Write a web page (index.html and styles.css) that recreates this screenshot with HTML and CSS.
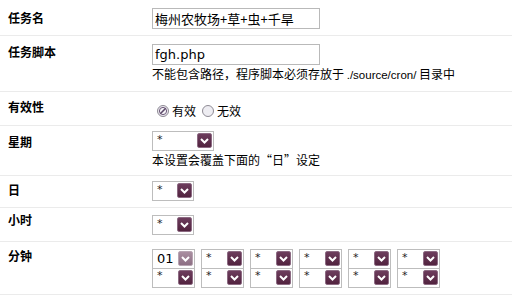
FILE: index.html
```html
<!DOCTYPE html>
<html lang="zh-CN">
<head>
<meta charset="utf-8">
<title>计划任务编辑</title>
<link rel="stylesheet" href="styles.css">
</head>
<body>
<div class="form">
  <div class="row r1">
    <div class="label">任务名</div>
    <div class="field"><div class="text">梅州农牧场+草+虫+千旱</div></div>
  </div>
  <div class="row r2">
    <div class="label">任务脚本</div>
    <div class="field">
      <div class="text latin">fgh.php</div>
      <div class="tip">不能包含路径，程序脚本必须存放于 <span class="arial">./source/cron/</span> 目录中</div>
    </div>
  </div>
  <div class="row r3">
    <div class="label">有效性</div>
    <div class="field radios">
      <span class="radio">
        <svg width="12" height="12" viewBox="0 0 12 12"><circle cx="6" cy="6" r="5.5" fill="#ece9f0" stroke="#8e8a94"/><circle cx="6" cy="6" r="3.6" fill="#f6f4f8" stroke="#6d5a78" stroke-width="1"/><line x1="3.8" y1="8.2" x2="8.2" y2="3.8" stroke="#5c4a6a" stroke-width="1.6" stroke-linecap="round"/></svg>
        有效
      </span>
      <span class="radio">
        <svg width="12" height="12" viewBox="0 0 12 12"><circle cx="6" cy="6" r="5.5" fill="#eeedf2" stroke="#8e8a94"/></svg>
        无效
      </span>
    </div>
  </div>
  <div class="row r4">
    <div class="label">星期</div>
    <div class="field">
      <div class="select wide"><span class="val">*</span><span class="btn"><svg width="9" height="6" viewBox="0 0 9 6"><path d="M1 1 L4.5 4.5 L8 1" fill="none" stroke="#fff" stroke-width="2"/></svg></span></div>
      <div class="tip">本设置会覆盖下面的“日”设定</div>
    </div>
  </div>
  <div class="row r5">
    <div class="label">日</div>
    <div class="field">
      <div class="select"><span class="val">*</span><span class="btn"><svg width="9" height="6" viewBox="0 0 9 6"><path d="M1 1 L4.5 4.5 L8 1" fill="none" stroke="#fff" stroke-width="2"/></svg></span></div>
    </div>
  </div>
  <div class="row r6">
    <div class="label">小时</div>
    <div class="field">
      <div class="select"><span class="val">*</span><span class="btn"><svg width="9" height="6" viewBox="0 0 9 6"><path d="M1 1 L4.5 4.5 L8 1" fill="none" stroke="#fff" stroke-width="2"/></svg></span></div>
    </div>
  </div>
  <div class="row r7">
    <div class="label">分钟</div>
    <div class="field grid">
      <div class="select"><span class="val num">01</span><span class="btn light"><svg width="9" height="6" viewBox="0 0 9 6"><path d="M1 1 L4.5 4.5 L8 1" fill="none" stroke="#fff" stroke-width="2"/></svg></span></div>
      <div class="select"><span class="val">*</span><span class="btn"><svg width="9" height="6" viewBox="0 0 9 6"><path d="M1 1 L4.5 4.5 L8 1" fill="none" stroke="#fff" stroke-width="2"/></svg></span></div>
      <div class="select"><span class="val">*</span><span class="btn"><svg width="9" height="6" viewBox="0 0 9 6"><path d="M1 1 L4.5 4.5 L8 1" fill="none" stroke="#fff" stroke-width="2"/></svg></span></div>
      <div class="select"><span class="val">*</span><span class="btn"><svg width="9" height="6" viewBox="0 0 9 6"><path d="M1 1 L4.5 4.5 L8 1" fill="none" stroke="#fff" stroke-width="2"/></svg></span></div>
      <div class="select"><span class="val">*</span><span class="btn"><svg width="9" height="6" viewBox="0 0 9 6"><path d="M1 1 L4.5 4.5 L8 1" fill="none" stroke="#fff" stroke-width="2"/></svg></span></div>
      <div class="select"><span class="val">*</span><span class="btn"><svg width="9" height="6" viewBox="0 0 9 6"><path d="M1 1 L4.5 4.5 L8 1" fill="none" stroke="#fff" stroke-width="2"/></svg></span></div>
      <div class="select"><span class="val">*</span><span class="btn"><svg width="9" height="6" viewBox="0 0 9 6"><path d="M1 1 L4.5 4.5 L8 1" fill="none" stroke="#fff" stroke-width="2"/></svg></span></div>
      <div class="select"><span class="val">*</span><span class="btn"><svg width="9" height="6" viewBox="0 0 9 6"><path d="M1 1 L4.5 4.5 L8 1" fill="none" stroke="#fff" stroke-width="2"/></svg></span></div>
      <div class="select"><span class="val">*</span><span class="btn"><svg width="9" height="6" viewBox="0 0 9 6"><path d="M1 1 L4.5 4.5 L8 1" fill="none" stroke="#fff" stroke-width="2"/></svg></span></div>
      <div class="select"><span class="val">*</span><span class="btn"><svg width="9" height="6" viewBox="0 0 9 6"><path d="M1 1 L4.5 4.5 L8 1" fill="none" stroke="#fff" stroke-width="2"/></svg></span></div>
      <div class="select"><span class="val">*</span><span class="btn"><svg width="9" height="6" viewBox="0 0 9 6"><path d="M1 1 L4.5 4.5 L8 1" fill="none" stroke="#fff" stroke-width="2"/></svg></span></div>
      <div class="select"><span class="val">*</span><span class="btn"><svg width="9" height="6" viewBox="0 0 9 6"><path d="M1 1 L4.5 4.5 L8 1" fill="none" stroke="#fff" stroke-width="2"/></svg></span></div>
    </div>
  </div>
</div>
</body>
</html>
```

FILE: styles.css
```css
html, body {
  margin: 0;
  padding: 0;
  background: #fff;
}
body {
  font-family: "Noto Sans CJK SC", "DejaVu Sans", sans-serif;
  font-size: 12px;
  color: #000;
}
.form {
  width: 512px;
}
.row {
  display: flex;
  align-items: flex-start;
  border-bottom: 1px solid #ebebeb;
}
.label {
  width: 152px;
  padding-left: 8px;
  box-sizing: border-box;
  font-weight: bold;
  line-height: 16px;
  flex: none;
}
.field {
  flex: 1;
}
.r1 { padding-bottom: 6px; }
.r1 .label { padding-top: 10px; }
.r1 .field { padding-top: 8px; }
.r2 { padding-bottom: 7px; }
.r2 .label { padding-top: 8px; }
.r2 .field { padding-top: 8px; }
.r3 { padding-bottom: 8px; }
.r3 .label { padding-top: 7px; }
.r3 .field { padding-top: 13px; }
.r4 { padding-bottom: 7px; }
.r4 .label { padding-top: 8px; }
.r4 .field { padding-top: 5px; }
.r5 { padding-bottom: 6px; }
.r5 .label { padding-top: 6px; }
.r5 .field { padding-top: 5px; }
.r6 { padding-bottom: 6px; }
.r6 .label { padding-top: 4px; }
.r6 .field { padding-top: 7px; }
.r7 { padding-bottom: 6px; }
.r7 .label { padding-top: 6px; }
.r7 .field { padding-top: 7px; }
.latin {
  font-family: "DejaVu Sans", "Noto Sans CJK SC", sans-serif;
}
.arial {
  font-family: "Liberation Sans", Arial, sans-serif;
  font-size: 11.5px;
}
.text {
  width: 168px;
  height: 21px;
  box-sizing: border-box;
  border: 1px solid #b9b9b9;
  font-size: 13px;
  line-height: 19px;
  padding-left: 2px;
  white-space: nowrap;
  overflow: hidden;
}
.tip {
  line-height: 17px;
}
.radios {
  display: flex;
  align-items: center;
  line-height: 12px;
}
.radio {
  display: inline-flex;
  align-items: center;
  gap: 3px;
  margin-left: 5px;
  margin-right: 1px;
}
.radio svg { display: block; }
.select {
  width: 42px;
  height: 20px;
  box-sizing: border-box;
  border: 1px solid #bdbdbd;
  background: #fff;
  display: flex;
  align-items: flex-start;
  justify-content: space-between;
  padding: 1px 1px 0 4px;
}
.select.wide { width: 62px; }
.val {
  font-family: "DejaVu Sans", sans-serif;
  font-size: 11px;
  line-height: 11px;
  margin-top: 1px;
  color: #222;
}
.val.num {
  font-size: 13px;
  line-height: 16px;
  margin-top: 0;
  color: #000;
}
.btn {
  width: 15px;
  height: 15px;
  box-sizing: border-box;
  border: 1px solid #8c6a82;
  border-radius: 2px;
  background: linear-gradient(#6d3d5d, #52233f);
  display: flex;
  align-items: center;
  justify-content: center;
}
.btn.light {
  border-color: #b8a4b2;
  background: linear-gradient(#a98ea0, #8d6f84);
}
.btn svg { display: block; }
.grid {
  display: grid;
  grid-template-columns: repeat(6, 43px);
  column-gap: 6px;
}
.grid .select { width: 43px; }
.grid .select:nth-child(n+7) {
  border-top: none;
  height: 19px;
  padding-top: 0;
}
.grid .select:nth-child(n+7) .btn { margin-top: 1px; }
```
